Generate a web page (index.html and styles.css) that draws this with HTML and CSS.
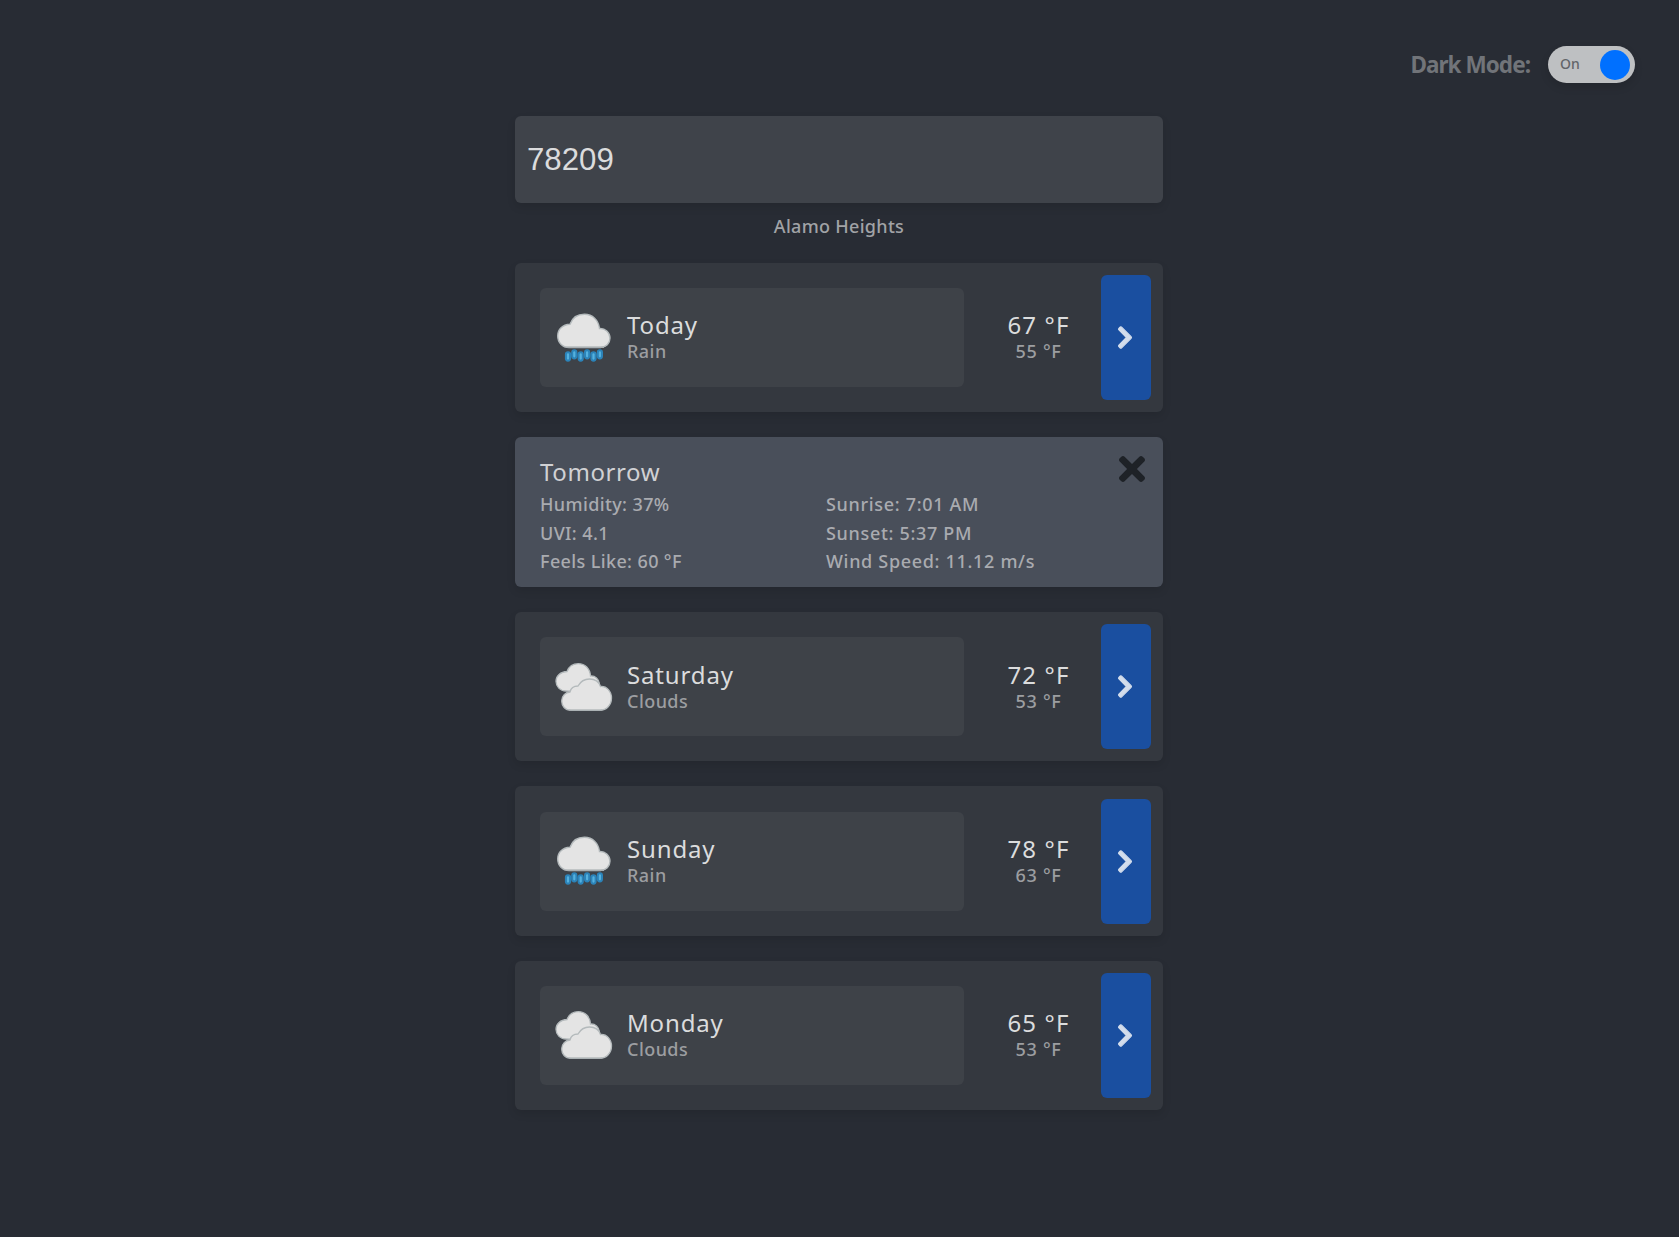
FILE: index.html
```html
<!DOCTYPE html>
<html lang="en">
<head>
<meta charset="utf-8">
<title>Weather</title>
<link rel="stylesheet" href="styles.css">
</head>
<body>
<svg class="defs" width="0" height="0">
  <symbol id="chevron" viewBox="0 0 320 512"><path fill="currentColor" stroke="currentColor" stroke-width="22" d="M285.476 272.971L91.132 467.314c-9.373 9.373-24.569 9.373-33.941 0l-22.667-22.667c-9.357-9.357-9.375-24.522-.04-33.901L188.505 256 34.484 101.255c-9.335-9.379-9.317-24.544.04-33.901l22.667-22.667c9.373-9.373 24.569-9.373 33.941 0L285.475 239.03c9.373 9.372 9.373 24.568.001 33.941z"/></symbol>
  <symbol id="rain" viewBox="0 0 60 54">
    <path fill="#e4e4e4" stroke="#b4babc" stroke-width="1.4" d="M15 36.500C8.500 36.500 3.700 31.500 3.700 25S8.500 13.700 16 13.300C18 7.500 23 3.300 30.500 3.300C38.500 3.300 44.500 9 45.500 17.500C51 17 56 21.500 56 27S52 36.500 46.500 36.500Z"/>
    <path stroke="#a9afb2" stroke-width="1.5" d="M12 36.300H50"/>
    <g stroke-linecap="round"><path stroke="#2b83b9" stroke-width="6.200" d="M14 43.300v4.300M20.300 41.300v4M26.700 43.300v4.300M33.100 41.300v4M39.500 43.300v4.300M45.900 41.300v4"/>
    <path stroke="#55b1de" stroke-width="2.200" d="M14 43.300v4.300M20.300 41.300v4M26.700 43.300v4.300M33.100 41.300v4M39.500 43.300v4.300M45.900 41.300v4"/></g>
  </symbol>
  <symbol id="clouds" viewBox="0 0 60 54">
    <g fill="#e4e4e4" stroke="#b4babc" stroke-width="1.3">
      <path d="M12 31C6 31 2 26.500 2 21.300S6.500 11.700 13 11.500C15 6.500 19 3.700 24.300 3.700C31 3.700 36 8.500 36.500 16C41 15.500 45 19 45.500 24L30 32Z"/>
      <path d="M17 50.300C11 50.300 7.700 46 7.700 41S11.500 32.300 16 32C17 27.500 20 26 24 26C26.500 21.500 31 19 35.500 19C41 19 45 22 46.500 26.500C53 26 57.500 31.500 57.500 38C57.500 45 52.500 50.300 46 50.300Z"/>
      <path stroke="#a9afb2" d="M15 50.200H48"/>
    </g>
  </symbol>
</svg>
<header class="topbar">
  <span class="topbar-label">Dark Mode:</span>
  <button class="toggle" type="button"><span class="toggle-text">On</span><span class="toggle-knob"></span></button>
</header>
<main class="forecast">
  <input class="zip" type="text" value="78209" aria-label="Zip code">
  <div class="city">Alamo Heights</div>
  <section class="card">
    <div class="summary"><svg class="icon"><use href="#rain"/></svg><div class="label"><div class="big">Today</div><div class="small">Rain</div></div></div>
    <div class="temps"><div class="big temp">67 °F</div><div class="small low">55 °F</div></div>
    <button class="next" type="button"><svg class="chevron"><use href="#chevron"/></svg></button>
  </section>
  <section class="card details">
    <div class="big tomorrow">Tomorrow</div>
    <div class="stats">
      <div>Humidity: 37%</div><div class="wide">Sunrise: 7:01 AM</div>
      <div>UVI: 4.1</div><div class="wide">Sunset: 5:37 PM</div>
      <div>Feels Like: 60 °F</div><div class="wide">Wind Speed: 11.12 m/s</div>
    </div>
    <svg class="close" viewBox="0 0 352 352"><path transform="translate(0 -80)" fill="#1e2227" d="M242.720 256l100.070-100.070c12.280-12.280 12.280-32.190 0-44.480l-22.240-22.240c-12.280-12.280-32.190-12.280-44.480 0L176 189.280 75.930 89.210c-12.280-12.280-32.190-12.280-44.480 0L9.210 111.450c-12.280 12.280-12.280 32.190 0 44.480L109.280 256 9.210 356.070c-12.280 12.280-12.280 32.190 0 44.480l22.240 22.240c12.280 12.280 32.200 12.280 44.480 0L176 322.720l100.070 100.070c12.280 12.280 32.200 12.280 44.480 0l22.240-22.240c12.280-12.280 12.280-32.190 0-44.480L242.720 256z"/></svg>
  </section>
  <section class="card">
    <div class="summary"><svg class="icon"><use href="#clouds"/></svg><div class="label"><div class="big">Saturday</div><div class="small">Clouds</div></div></div>
    <div class="temps"><div class="big temp">72 °F</div><div class="small low">53 °F</div></div>
    <button class="next" type="button"><svg class="chevron"><use href="#chevron"/></svg></button>
  </section>
  <section class="card">
    <div class="summary"><svg class="icon"><use href="#rain"/></svg><div class="label"><div class="big">Sunday</div><div class="small">Rain</div></div></div>
    <div class="temps"><div class="big temp">78 °F</div><div class="small low">63 °F</div></div>
    <button class="next" type="button"><svg class="chevron"><use href="#chevron"/></svg></button>
  </section>
  <section class="card">
    <div class="summary"><svg class="icon"><use href="#clouds"/></svg><div class="label"><div class="big">Monday</div><div class="small">Clouds</div></div></div>
    <div class="temps"><div class="big temp">65 °F</div><div class="small low">53 °F</div></div>
    <button class="next" type="button"><svg class="chevron"><use href="#chevron"/></svg></button>
  </section>
</main>
</body>
</html>
```
FILE: styles.css
```css
* { box-sizing: border-box; }
body {
  margin: 0;
  min-height: 100vh;
  background: #282c34;
  font-family: "Noto Sans", sans-serif;
  color: #dbdcdd;
}
.defs { position: absolute; }
button { border: 0; padding: 0; font-family: inherit; }
.topbar {
  display: flex;
  justify-content: flex-end;
  align-items: center;
  gap: 18px;
  height: 83px;
  padding: 46px 44px 0 0;
}
.topbar-label { font-size: 22.500px; font-weight: 700; letter-spacing: -.95px; color: #717479; line-height: 36px; }
.toggle {
  display: flex;
  align-items: center;
  justify-content: space-between;
  width: 87px;
  height: 37px;
  padding: 0 5px 0 12px;
  border-radius: 19px;
  background: #bec0c2;
  box-shadow: 0 4px 8px rgba(0, 0, 0, .13);
}
.toggle-text { font-size: 14px; font-weight: 500; line-height: 18px; padding-bottom: 2px; color: #626569; }
.toggle-knob { width: 30px; height: 30px; border-radius: 50%; background: #0070ff; }
.forecast {
  display: flex;
  flex-direction: column;
  width: 648px;
  margin: 33px auto 0 515px;
}
.zip {
  height: 87px;
  padding: 0 12px;
  border: 0;
  border-radius: 6px;
  background: #3f434a;
  color: #dbdcdd;
  font: 31.200px "Liberation Sans", sans-serif;
  box-shadow: 0 4px 8px rgba(0, 0, 0, .1);
}
.city { height: 60px; padding-top: 10px; text-align: center; font-size: 18px; font-weight: 500; letter-spacing: .3px; line-height: 26px; color: #a1a3a6; }
.card {
  display: flex;
  align-items: center;
  height: 149.450px;
  margin-bottom: 25px;
  padding: 12px 12px 12px 25px;
  border-radius: 6px;
  background: #34383f;
  box-shadow: 0 4px 8px rgba(0, 0, 0, .1);
}
.summary {
  display: flex;
  align-items: center;
  gap: 13px;
  width: 424px;
  height: 99px;
  padding-left: 14px;
  border-radius: 6px;
  background: #3e4248;
}
.icon { width: 60px; height: 54px; }
.big { font-size: 24px; line-height: 28px; letter-spacing: .85px; white-space: nowrap; }
.small { font-size: 18px; font-weight: 500; line-height: 25px; letter-spacing: .45px; color: #9c9ea1; white-space: nowrap; }
.temps { flex: 1; padding-left: 12px; text-align: center; }
.temp { letter-spacing: 1.150px; }
.low { letter-spacing: .75px; }
.details ~ .card .label,
.details ~ .card .temps { padding-top: 1px; }
.next {
  display: flex;
  align-items: center;
  justify-content: center;
  width: 50px;
  height: 125px;
  border-radius: 6px;
  background: #1a4fa0;
  color: #d3ddec;
}
.chevron { width: 16px; height: 25px; margin-right: 2px; }
.details { position: relative; display: block; padding: 19px 25px 0; background: #494f5a; }
.tomorrow { color: #d0d1d4; line-height: 32px; letter-spacing: .6px; margin-bottom: 2px; }
.stats { display: grid; grid-template-columns: 286px 1fr; font-size: 18px; font-weight: 500; letter-spacing: .38px; line-height: 28.400px; color: #a9abb0; }
.wide { letter-spacing: .68px; }
.close { position: absolute; top: 18.600px; right: 18px; width: 26px; height: 26px; }
```
